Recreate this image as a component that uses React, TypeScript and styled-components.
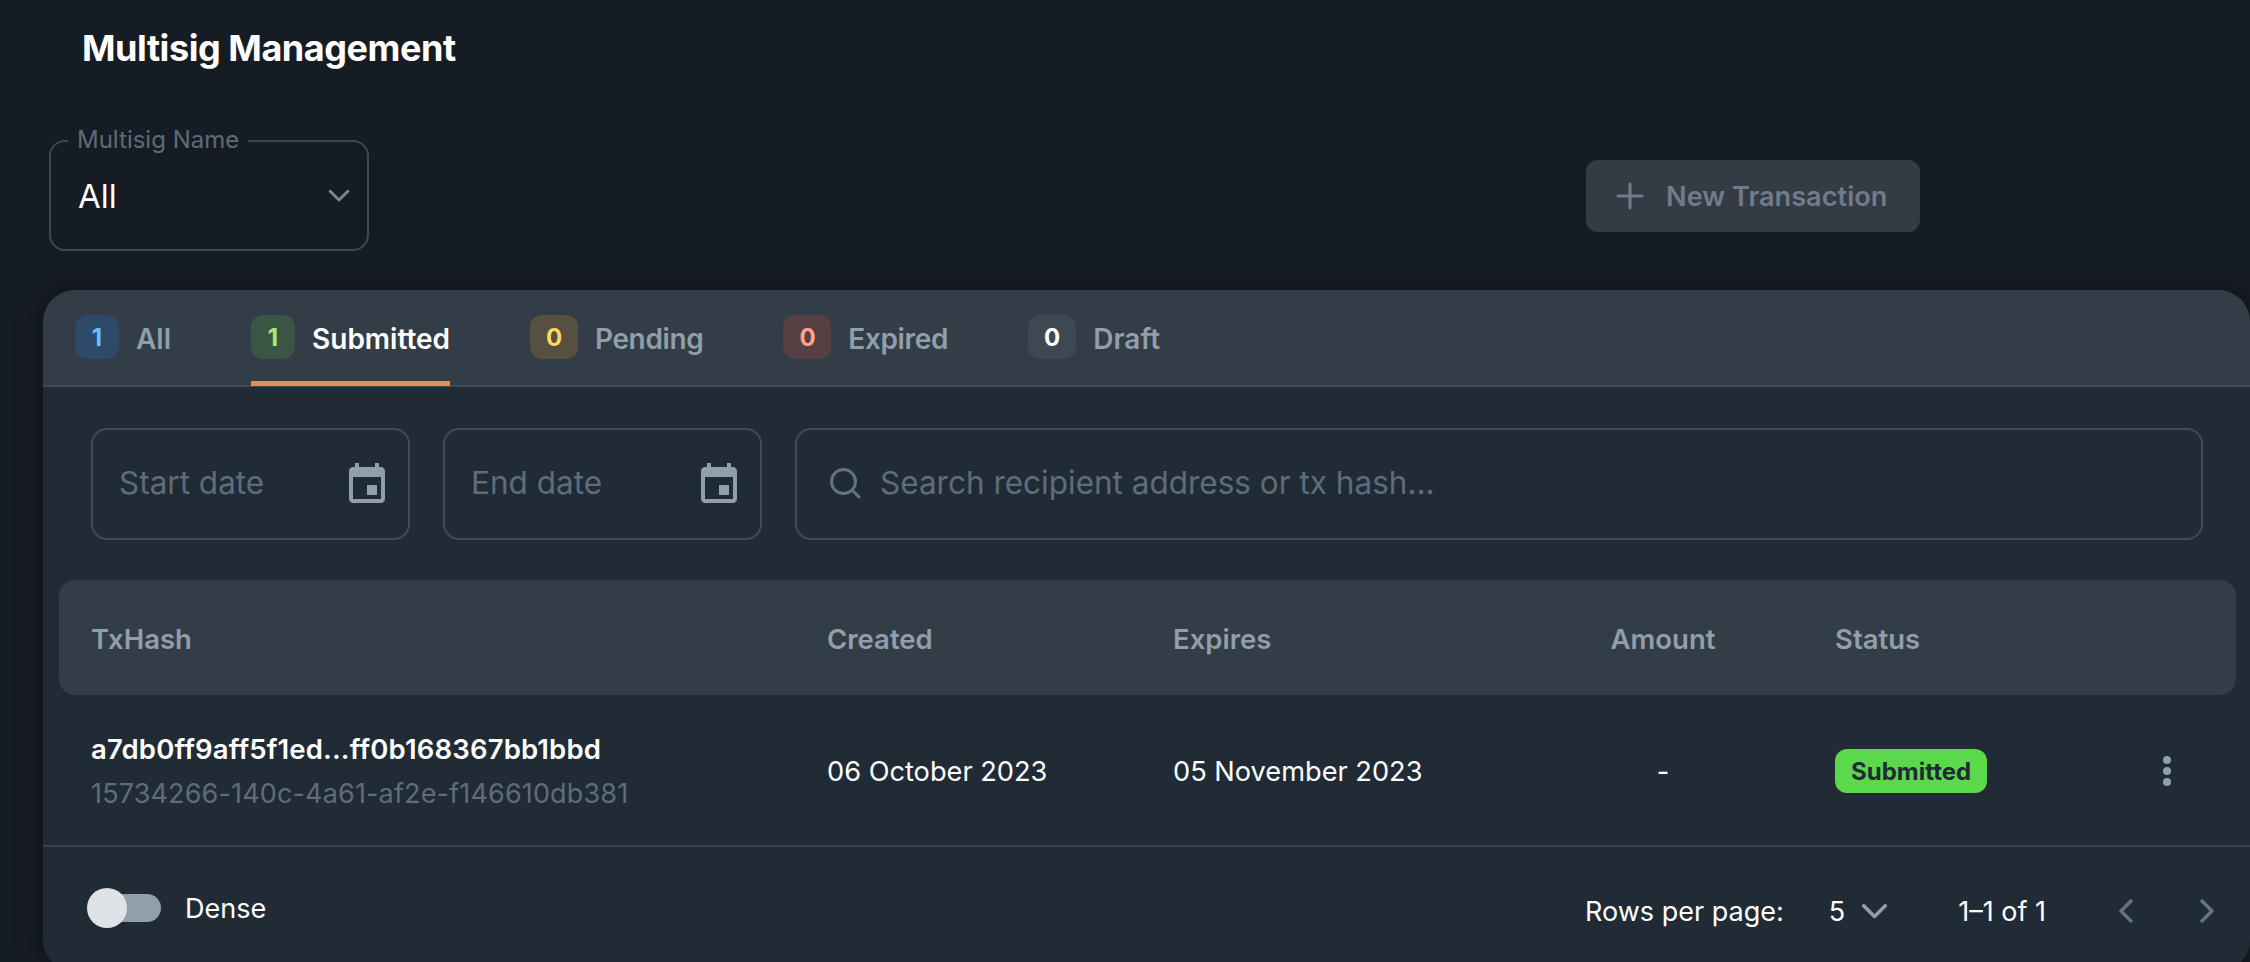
import React from "react";
import styled, { createGlobalStyle } from "styled-components";

const COLUMNS = "736px 346px 422px 136px 1fr";

const GlobalStyle = createGlobalStyle`
  html, body {
    margin: 0;
    height: 100%;
    background: #161c24;
    overflow: hidden;
  }
  * {
    box-sizing: border-box;
  }
  body {
    font-family: Inter, "Liberation Sans", sans-serif;
    color: #fff;
  }
`;

const Page = styled.div`
  width: 2250px;
  height: 962px;
  overflow: hidden;
`;

const Title = styled.h1`
  margin: 0;
  padding: 26px 0 0 82px;
  height: 140px;
  font-size: 36px;
  line-height: 44px;
  font-weight: 700;
  letter-spacing: -0.45px;
`;

const Toolbar = styled.div`
  display: flex;
  align-items: center;
  justify-content: space-between;
  height: 111px;
  margin-bottom: 39px;
  padding: 0 330px 0 49px;
`;

const SelectBox = styled.div`
  position: relative;
  display: flex;
  align-items: center;
  justify-content: space-between;
  width: 320px;
  height: 111px;
  padding: 0 17px 0 27px;
  border: 2px solid #3f4852;
  border-radius: 16px;
  font-size: 33px;
`;

const FloatingLabel = styled.span`
  position: absolute;
  top: -15px;
  left: 17px;
  padding: 0 9px;
  background: #161c24;
  color: #5d6b79;
  font-size: 24px;
  line-height: 26px;
`;

const NewButton = styled.button`
  display: flex;
  align-items: center;
  gap: 22px;
  height: 72px;
  width: 334px;
  padding: 1px 0 0 30px;
  border: 0;
  border-radius: 12px;
  background: #343b45;
  color: #707c89;
  font: 600 27.2px Inter, sans-serif;
`;

const Card = styled.section`
  width: 2207px;
  margin-left: 43px;
  height: 682px;
  border-radius: 32px;
  background: #212b36;
  box-shadow: 0 0 24px 6px rgba(0, 0, 0, 0.22);
  overflow: hidden;
`;

const TabBar = styled.div`
  display: flex;
  gap: 80px;
  height: 97px;
  padding-left: 32px;
  background: #333d47;
  border-bottom: 2px solid #3f4954;
`;

const Tab = styled.div<{ $active?: boolean; $tight?: boolean }>`
  display: flex;
  align-items: center;
  gap: 17px;
  height: 96px;
  padding-top: 6px;
  font-size: 28px;
  font-weight: 600;
  letter-spacing: ${(p) => (p.$tight ? "-0.35px" : "0")};
  color: ${(p) => (p.$active ? "#fff" : "#919eab")};
  border-bottom: 5px solid ${(p) => (p.$active ? "#f08d43" : "transparent")};
`;

const TabCount = styled.span<{ $bg: string; $fg: string }>`
  display: flex;
  align-items: center;
  justify-content: center;
  min-width: 44px;
  height: 44px;
  margin-top: -3px;
  padding: 0 16px;
  border-radius: 12px;
  background: ${(p) => p.$bg};
  color: ${(p) => p.$fg};
  font-size: 24px;
  font-weight: 700;
`;

const Filters = styled.div`
  display: flex;
  gap: 33px;
  padding: 41px 47px 40px 48px;
`;

const Field = styled.div<{ $grow?: boolean }>`
  display: flex;
  align-items: center;
  justify-content: ${(p) => (p.$grow ? "flex-start" : "space-between")};
  gap: 19px;
  ${(p) => (p.$grow ? "flex: 1;" : "width: 319px;")}
  height: 112px;
  padding: 0 17px 3px ${(p) => (p.$grow ? "32px" : "26px")};
  border: 2px solid #414b56;
  border-radius: 16px;
  color: #5f6c7a;
  font-size: 31.5px;
`;

const CalendarSvg = styled.svg`
  margin-top: 4px;
  fill: #919eab;
`;

const TableHead = styled.div`
  display: grid;
  grid-template-columns: ${COLUMNS};
  align-items: center;
  width: 2177px;
  height: 115px;
  margin-left: 16px;
  padding: 2px 0 0 32px;
  border-radius: 16px;
  background: #333d47;
  color: #919eab;
  font-size: 27.5px;
  font-weight: 600;
`;

const StatusHead = styled.div`
  padding-left: 104px;
`;

const TableRow = styled.div`
  display: grid;
  grid-template-columns: ${COLUMNS};
  align-items: center;
  height: 152px;
  padding: 2px 0 0 48px;
  border-bottom: 2px solid #3a444f;
  font-size: 27.2px;
`;

const Centered = styled.div`
  text-align: center;
`;

const HashCell = styled.div`
  display: flex;
  flex-direction: column;
  gap: 15px;
`;

const Hash = styled.span`
  font-size: 27.5px;
  line-height: 30px;
  font-weight: 600;
  letter-spacing: 0.15px;
`;

const RequestId = styled.span`
  font-size: 27px;
  line-height: 30px;
  letter-spacing: 0.15px;
  color: #5f6c7a;
`;

const StatusCell = styled.div`
  display: flex;
  align-items: center;
  justify-content: space-between;
  padding: 0 78px 0 104px;
`;

const StatusLabel = styled.span`
  display: flex;
  align-items: center;
  height: 44px;
  padding: 0 16px;
  border-radius: 12px;
  background: #5bd84b;
  color: #212b36;
  font-size: 24px;
  font-weight: 700;
`;

const Footer = styled.div`
  display: flex;
  align-items: center;
  justify-content: space-between;
  height: 120px;
  padding: 2px 23px 0 44px;
  font-size: 27px;
`;

const DenseToggle = styled.div`
  display: flex;
  align-items: center;
  gap: 24px;
`;

const SwitchTrack = styled.div`
  position: relative;
  width: 71px;
  height: 28px;
  margin-left: 3px;
  border-radius: 14px;
  background: #919eab;
`;

const SwitchThumb = styled.span`
  position: absolute;
  left: -3px;
  top: -6px;
  width: 40px;
  height: 40px;
  border-radius: 50%;
  background: #dfe3e8;
`;

const Pagination = styled.div`
  display: flex;
  align-items: center;
  padding-top: 6px;
`;

const RowsValue = styled.span`
  margin-left: 45px;
  margin-right: 16px;
`;

const PageRange = styled.span`
  margin-left: 70px;
  margin-right: 60px;
`;

const PageButton = styled.span`
  display: flex;
  width: 40px;
  justify-content: center;
  & + & {
    margin-left: 41px;
  }
`;

const Chevron: React.FC<{ color: string; size?: number }> = ({ color, size = 27 }) => (
  <svg width={size} height={size * 0.6} viewBox="0 0 20 12" fill="none">
    <path d="M2 2l8 8 8-8" stroke={color} strokeWidth="2.6" strokeLinecap="round" strokeLinejoin="round" />
  </svg>
);

const PageArrow: React.FC<{ flip?: boolean }> = ({ flip }) => (
  <svg width="16" height="24" viewBox="0 0 16 24" fill="none" transform={flip ? "scale(-1 1)" : undefined}>
    <path d="M13 2L3 12l10 10" stroke="#637381" strokeWidth="3.5" strokeLinecap="round" strokeLinejoin="round" />
  </svg>
);

const CalendarIcon = () => (
  <CalendarSvg width="48" height="48" viewBox="0 0 24 24">
    <path d="M17 12h-5v5h5v-5zM16 1v2H8V1H6v2H5c-1.11 0-1.99.9-1.99 2L3 19c0 1.1.89 2 2 2h14c1.1 0 2-.9 2-2V5c0-1.1-.9-2-2-2h-1V1h-2zm3 18H5V8h14v11z" />
  </CalendarSvg>
);

const SearchIcon = () => (
  <svg width="32" height="32" viewBox="0 0 32 32" fill="none" stroke="#637381" strokeWidth="3" strokeLinecap="round">
    <circle cx="14.5" cy="14.5" r="12" />
    <path d="M23.5 23.5L30 30" />
  </svg>
);

const PlusIcon = () => (
  <svg width="28" height="28" viewBox="0 0 28 28" stroke="#707c89" strokeWidth="3" strokeLinecap="round">
    <path d="M14 2v24M2 14h24" />
  </svg>
);

const MoreIcon = () => (
  <svg width="10" height="32" viewBox="0 0 10 32" fill="#919eab">
    <circle cx="5" cy="5" r="4" />
    <circle cx="5" cy="16" r="4" />
    <circle cx="5" cy="27" r="4" />
  </svg>
);

const tabs = [
  { label: "All", count: 1, bg: "#2d4a68", fg: "#61c3ff" },
  { label: "Submitted", count: 1, bg: "#3b5545", fg: "#a6ee6f", active: true },
  { label: "Pending", count: 0, bg: "#55503f", fg: "#ffd666", tight: true },
  { label: "Expired", count: 0, bg: "#574043", fg: "#ffa48d", tight: true },
  { label: "Draft", count: 0, bg: "#3e4853", fg: "#ffffff" },
];

const App: React.FC = () => {
  return (
    <Page>
      <GlobalStyle />
      <Title>Multisig Management</Title>
      <Toolbar>
        <SelectBox>
          <FloatingLabel>Multisig Name</FloatingLabel>
          All
          <Chevron color="#7b8794" size={22} />
        </SelectBox>
        <NewButton>
          <PlusIcon />
          New Transaction
        </NewButton>
      </Toolbar>
      <Card>
        <TabBar>
          {tabs.map((tab) => (
            <Tab key={tab.label} $active={tab.active} $tight={tab.tight}>
              <TabCount $bg={tab.bg} $fg={tab.fg}>{tab.count}</TabCount>
              {tab.label}
            </Tab>
          ))}
        </TabBar>
        <Filters>
          <Field>
            Start date
            <CalendarIcon />
          </Field>
          <Field>
            End date
            <CalendarIcon />
          </Field>
          <Field $grow>
            <SearchIcon />
            Search recipient address or tx hash...
          </Field>
        </Filters>
        <TableHead>
          <div>TxHash</div>
          <div>Created</div>
          <div>Expires</div>
          <Centered>Amount</Centered>
          <StatusHead>Status</StatusHead>
        </TableHead>
        <TableRow>
          <HashCell>
            <Hash>a7db0ff9aff5f1ed...ff0b168367bb1bbd</Hash>
            <RequestId>15734266-140c-4a61-af2e-f146610db381</RequestId>
          </HashCell>
          <div>06 October 2023</div>
          <div>05 November 2023</div>
          <Centered>-</Centered>
          <StatusCell>
            <StatusLabel>Submitted</StatusLabel>
            <MoreIcon />
          </StatusCell>
        </TableRow>
        <Footer>
          <DenseToggle>
            <SwitchTrack>
              <SwitchThumb />
            </SwitchTrack>
            Dense
          </DenseToggle>
          <Pagination>
            Rows per page:
            <RowsValue>5</RowsValue>
            <Chevron color="#919eab" />
            <PageRange>1–1 of 1</PageRange>
            <PageButton><PageArrow /></PageButton>
            <PageButton><PageArrow flip /></PageButton>
          </Pagination>
        </Footer>
      </Card>
    </Page>
  );
};

export default App;
